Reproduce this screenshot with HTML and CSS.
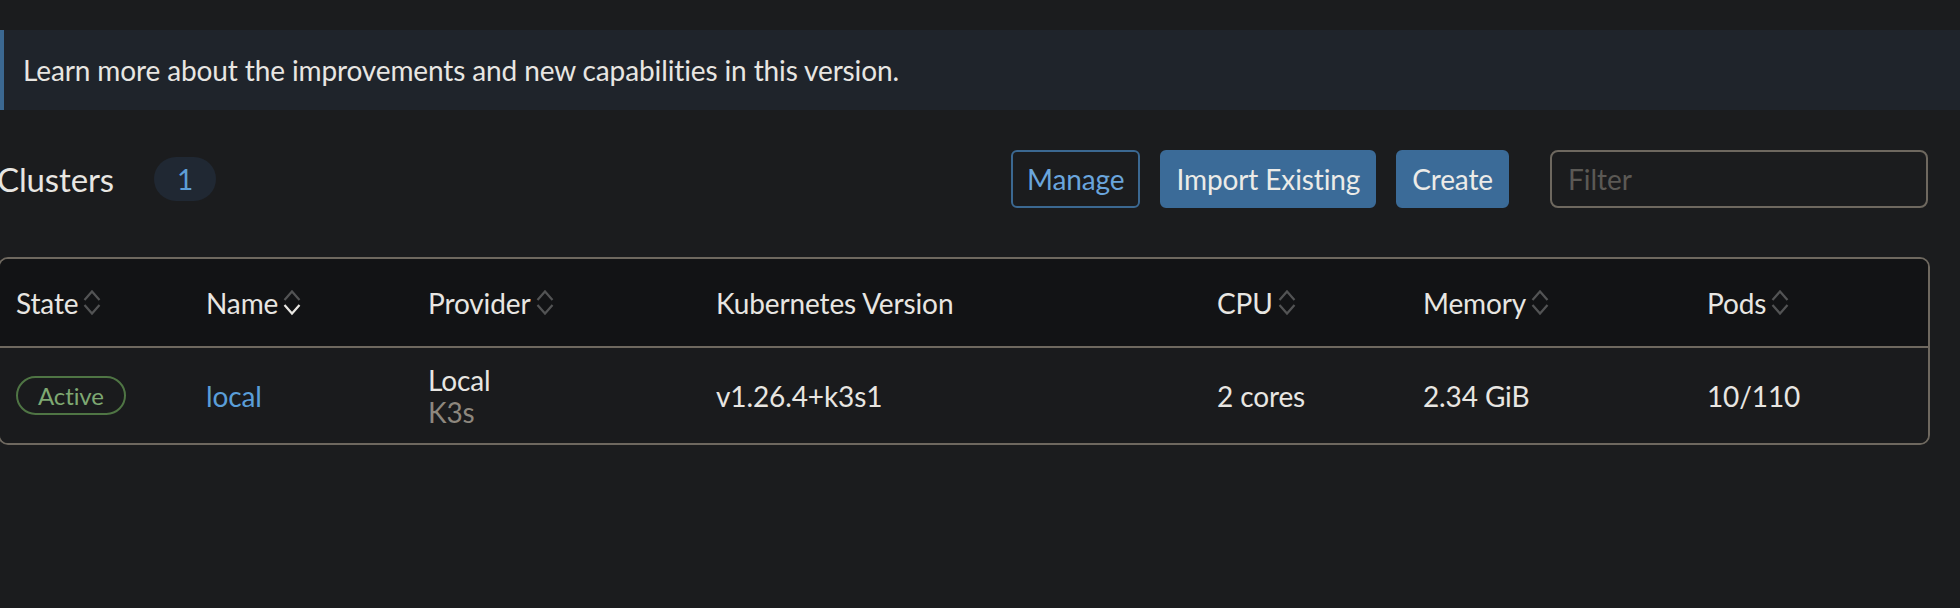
FILE: index.html
```html
<!DOCTYPE html>
<html lang="en">
<head>
<meta charset="utf-8">
<title>Clusters</title>
<link rel="stylesheet" href="styles.css">
</head>
<body>
  <div class="banner">Learn more about the improvements and new capabilities in this version.</div>

  <main class="content">
    <header class="masthead">
      <h1 class="title">Clusters</h1>
      <span class="count">1</span>
      <div class="actions">
        <button class="btn btn-outline">Manage</button>
        <button class="btn btn-primary">Import Existing</button>
        <button class="btn btn-primary">Create</button>
        <input class="filter" type="text" placeholder="Filter">
      </div>
    </header>

    <div class="table">
      <div class="thead">
        <div class="th">State <svg class="sort" viewBox="0 0 18 27"><polyline class="up" points="1.5,11 9,2.5 16.5,11"/><polyline class="down" points="1.5,16 9,24.5 16.5,16"/></svg></div>
        <div class="th">Name <svg class="sort sorted" viewBox="0 0 18 27"><polyline class="up" points="1.5,11 9,2.5 16.5,11"/><polyline class="down" points="1.5,16 9,24.5 16.5,16"/></svg></div>
        <div class="th">Provider <svg class="sort" viewBox="0 0 18 27"><polyline class="up" points="1.5,11 9,2.5 16.5,11"/><polyline class="down" points="1.5,16 9,24.5 16.5,16"/></svg></div>
        <div class="th">Kubernetes Version</div>
        <div class="th">CPU <svg class="sort" viewBox="0 0 18 27"><polyline class="up" points="1.5,11 9,2.5 16.5,11"/><polyline class="down" points="1.5,16 9,24.5 16.5,16"/></svg></div>
        <div class="th">Memory <svg class="sort" viewBox="0 0 18 27"><polyline class="up" points="1.5,11 9,2.5 16.5,11"/><polyline class="down" points="1.5,16 9,24.5 16.5,16"/></svg></div>
        <div class="th">Pods <svg class="sort" viewBox="0 0 18 27"><polyline class="up" points="1.5,11 9,2.5 16.5,11"/><polyline class="down" points="1.5,16 9,24.5 16.5,16"/></svg></div>
      </div>
      <div class="row">
        <div class="td"><span class="state">Active</span></div>
        <div class="td"><a class="link" href="#">local</a></div>
        <div class="td provider"><span>Local</span><span class="sub">K3s</span></div>
        <div class="td">v1.26.4+k3s1</div>
        <div class="td">2 cores</div>
        <div class="td">2.34 GiB</div>
        <div class="td">10/110</div>
      </div>
    </div>
  </main>
</body>
</html>
```

FILE: styles.css
```css
* { box-sizing: border-box; }

html, body {
  margin: 0;
  padding: 0;
  background: #1b1c1e;
  color: #e8e6e2;
  font-family: Lato, "Open Sans", sans-serif;
  font-size: 28px;
  letter-spacing: -0.12px;
  overflow: hidden;
}

.banner {
  margin-top: 30px;
  height: 80px;
  display: flex;
  align-items: center;
  background: #1f242b;
  border-left: 4px solid #3b6891;
  padding-left: 19px;
  color: #e8e6e2;
}

.content {
  margin-left: -2px;
  width: 1932px;
}

.masthead {
  margin-top: 40px;
  height: 58px;
  display: flex;
  align-items: center;
}

.title {
  margin: 0 0 0 -1px;
  font-size: 33px;
  font-weight: 400;
  color: #e8e6e2;
}

.count {
  margin-left: 40px;
  height: 44px;
  min-width: 62px;
  padding: 0 20px;
  border-radius: 22px;
  background: #202833;
  color: #5d9ed6;
  display: inline-flex;
  align-items: center;
  justify-content: center;
  font-size: 28px;
}

.actions {
  margin-left: auto;
  display: flex;
  align-items: center;
  gap: 20px;
  margin-right: 2px;
}

.btn {
  height: 58px;
  padding: 0 14px;
  font-family: inherit;
  font-size: 28px;
  letter-spacing: -0.12px;
  border-radius: 6px;
  border: 2px solid transparent;
  cursor: pointer;
}

.btn-outline {
  background: transparent;
  border-color: #3b6891;
  color: #6aa5dc;
}

.btn-primary {
  background: #3b6b98;
  border-color: #3b6b98;
  color: #ecebe8;
}

.filter {
  margin-left: 21px;
  width: 378px;
  height: 58px;
  background: #1b1c1e;
  border: 2px solid #6e685f;
  border-radius: 8px;
  padding: 0 16px;
  font-family: inherit;
  font-size: 28px;
  color: #e8e6e2;
  outline: none;
}

.filter::placeholder { color: #5b5955; }

.table {
  margin-top: 49px;
  border: 2px solid #6e685f;
  border-radius: 10px;
  overflow: hidden;
}

.thead, .row {
  display: grid;
  grid-template-columns: 190px 222px 288px 501px 206px 284px 1fr;
}

.thead {
  background: #121315;
  height: 89px;
  border-bottom: 2px solid #6e685f;
}

.th, .td {
  padding-left: 16px;
  display: flex;
  align-items: center;
}

.sort {
  width: 18px;
  height: 27px;
  margin-left: 5px;
  fill: none;
  stroke: #525354;
  stroke-width: 2.2;
}

.sort.sorted .down { stroke: #e8e6e2; }

.row {
  background: #1a1b1d;
  height: 95px;
}

.state {
  height: 39px;
  padding: 0 20px;
  border: 2px solid #4f7544;
  border-radius: 20px;
  color: #7ea872;
  font-size: 24px;
  display: inline-flex;
  align-items: center;
}

.link {
  color: #5a9ed8;
  text-decoration: none;
}

.provider {
  flex-direction: column;
  align-items: flex-start;
  justify-content: center;
  line-height: 32px;
}

.sub { color: #8d877e; }
```
